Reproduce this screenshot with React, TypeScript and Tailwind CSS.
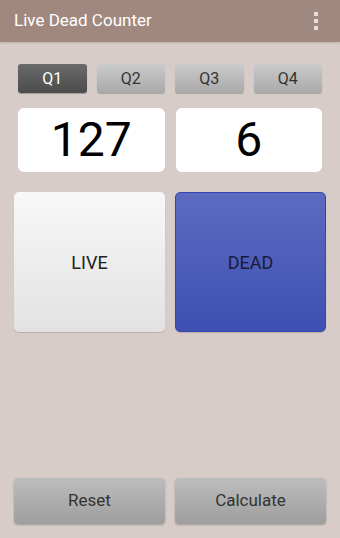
import { useState } from 'react';

const quarters = ['Q1', 'Q2', 'Q3', 'Q4'];

export default function App() {
  const [active, setActive] = useState('Q1');
  const [live, setLive] = useState(127);
  const [dead, setDead] = useState(6);

  return (
    <div
      className="flex h-[538px] w-[340px] flex-col bg-[#d7ccc8]"
      style={{ fontFamily: 'Roboto, "Liberation Sans", sans-serif' }}
    >
      {/* App bar */}
      <div className="flex h-[42px] items-center justify-between bg-[#a1887f] pl-[14px] pr-[22px] shadow-[0_1px_2px_rgba(0,0,0,0.15)]">
        <span className="text-[17px] text-white">Live Dead Counter</span>
        <div className="flex flex-col gap-[3px]">
          <span className="h-[4px] w-[4px] bg-[#e6dcd8]" />
          <span className="h-[4px] w-[4px] bg-[#e6dcd8]" />
          <span className="h-[4px] w-[4px] bg-[#e6dcd8]" />
        </div>
      </div>

      {/* Quarter tabs */}
      <div className="mt-[22px] grid grid-cols-4 gap-[10px] px-[18px]">
        {quarters.map((q) => (
          <button
            key={q}
            onClick={() => setActive(q)}
            className={
              active === q
                ? 'h-[29px] rounded-[3px] bg-gradient-to-b from-[#6a6a6a] to-[#4c4c4c] text-[16px] text-white shadow-[0_1px_1px_rgba(0,0,0,0.25)]'
                : 'h-[29px] rounded-[3px] bg-gradient-to-b from-[#cbcbcb] to-[#a9a9a9] text-[16px] text-[#333] shadow-[0_1px_1px_rgba(0,0,0,0.2)]'
            }
          >
            {q}
          </button>
        ))}
      </div>

      {/* Counters */}
      <div className="mt-[15px] grid grid-cols-2 gap-[11px] px-[18px]">
        <div className="flex h-[64px] items-center justify-center rounded-[6px] bg-white text-[48px] text-black">
          {live}
        </div>
        <div className="flex h-[64px] items-center justify-center rounded-[6px] bg-white text-[48px] text-black">
          {dead}
        </div>
      </div>

      {/* Tap buttons */}
      <div className="mt-[20px] grid grid-cols-2 gap-[10px] px-[14px]">
        <button
          onClick={() => setLive(live + 1)}
          className="h-[140px] rounded-[5px] bg-gradient-to-b from-[#f8f8f8] to-[#e2e2e2] text-[18px] text-[#222] shadow-[0_1px_1px_rgba(0,0,0,0.15)]"
        >
          LIVE
        </button>
        <button
          onClick={() => setDead(dead + 1)}
          className="h-[140px] rounded-[5px] border border-[#3445b0] bg-gradient-to-b from-[#5c6bc0] to-[#3f4fb2] text-[18px] text-[#1a1a3a] shadow-[0_1px_1px_rgba(0,0,0,0.15)]"
        >
          DEAD
        </button>
      </div>

      <div className="flex-1" />

      {/* Bottom actions */}
      <div className="mb-[14px] grid grid-cols-2 gap-[10px] px-[14px]">
        <button
          onClick={() => {
            setLive(0);
            setDead(0);
          }}
          className="h-[46px] rounded-[4px] bg-gradient-to-b from-[#bdbdbd] to-[#9e9e9e] text-[17px] text-[#333] shadow-[0_1px_2px_rgba(0,0,0,0.25)]"
        >
          Reset
        </button>
        <button className="h-[46px] rounded-[4px] bg-gradient-to-b from-[#bdbdbd] to-[#9e9e9e] text-[17px] text-[#333] shadow-[0_1px_2px_rgba(0,0,0,0.25)]">
          Calculate
        </button>
      </div>
    </div>
  );
}
